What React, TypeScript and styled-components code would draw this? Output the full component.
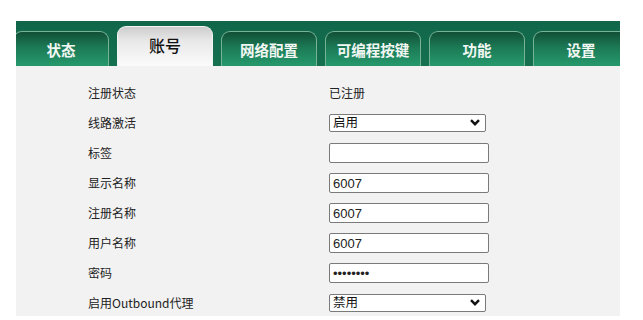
import React from "react";
import styled, { createGlobalStyle, css } from "styled-components";

const GlobalStyle = createGlobalStyle`
  html, body {
    margin: 0;
    padding: 0;
    background: #ffffff;
  }
  body {
    font-family: "Noto Sans CJK SC", "Liberation Sans", sans-serif;
  }
`;

const Page = styled.div`
  width: 643px;
  height: 320px;
  overflow: hidden;
  padding: 21px 0 0 16px;
  box-sizing: border-box;
`;

const Frame = styled.div`
  width: 604px;
`;

const TabBar = styled.div`
  height: 45px;
  background: linear-gradient(#11664a, #157150);
  display: flex;
  align-items: flex-end;
  gap: 8px;
  overflow: hidden;
`;

const Tab = styled.div<{ active?: boolean; first?: boolean }>`
  flex: 0 0 96px;
  box-sizing: border-box;
  border-radius: 9px 9px 0 0;
  display: flex;
  align-items: center;
  justify-content: center;
  font-weight: 700;
  ${({ first }) =>
    first &&
    css`
      margin-left: -3px;
    `}
  ${({ active }) =>
    active
      ? css`
          height: 40px;
          background: linear-gradient(#cdcdcd 0%, #e8e8e8 35%, #fbfbfb 100%);
          border: 1px solid #f4f4f4;
          border-bottom: none;
          color: #111;
          font-size: 16px;
          font-weight: 500;
          padding-bottom: 4px;
        `
      : css`
          height: 35px;
          background: linear-gradient(#114f37 0%, #1c7a55 45%, #26996d 100%);
          border: 1px solid #76b397;
          border-bottom: none;
          color: #f2f7f4;
          font-size: 14.5px;
        `}
`;

const Panel = styled.div`
  background: #f2f2f2;
  padding: 12px 0 0 72px;
  height: 250px;
  box-sizing: border-box;
`;

const Row = styled.div`
  height: 30px;
  display: grid;
  grid-template-columns: 241px 1fr;
  align-items: center;
  font-size: 12px;
  color: #222;
`;

const Label = styled.div`
  line-height: 14px;
`;

const Value = styled.div`
  line-height: 14px;
`;

const TextInput = styled.input`
  width: 160px;
  height: 20px;
  box-sizing: border-box;
  border: 1px solid #7a7a7a;
  border-radius: 2px;
  background: #fff;
  padding: 0 3px;
  font-family: "Liberation Sans", "Noto Sans CJK SC", sans-serif;
  font-size: 13px;
  color: #222;
  outline: none;
  display: block;
`;

const SelectWrap = styled.div`
  position: relative;
  width: 157px;
  height: 18px;
`;

const Select = styled.select`
  appearance: none;
  width: 100%;
  height: 100%;
  box-sizing: border-box;
  border: 1px solid #7a7a7a;
  border-radius: 2px;
  background: #fff;
  padding: 0 0 2px 3px;
  font-family: "Noto Sans CJK SC", sans-serif;
  font-size: 12.5px;
  line-height: 14px;
  color: #111;
  outline: none;
  display: block;
`;

const Chevron = styled.svg`
  position: absolute;
  right: 6px;
  top: 5px;
  pointer-events: none;
`;

const Dropdown = ({ value }: { value: string }) => (
  <SelectWrap>
    <Select defaultValue={value}>
      <option>{value}</option>
    </Select>
    <Chevron width="10" height="7" viewBox="0 0 10 7">
      <path d="M1 1.2 L5 5.2 L9 1.2" fill="none" stroke="#111" strokeWidth="2.4" />
    </Chevron>
  </SelectWrap>
);

const tabs = ["状态", "账号", "网络配置", "可编程按键", "功能", "设置"];

const App = () => {
  return (
    <Page>
      <GlobalStyle />
      <Frame>
        <TabBar>
          {tabs.map((t, i) => (
            <Tab key={t} active={t === "账号"} first={i === 0}>
              {t}
            </Tab>
          ))}
        </TabBar>
        <Panel>
          <Row>
            <Label>注册状态</Label>
            <Value>已注册</Value>
          </Row>
          <Row>
            <Label>线路激活</Label>
            <Dropdown value="启用" />
          </Row>
          <Row>
            <Label>标签</Label>
            <TextInput defaultValue="" />
          </Row>
          <Row>
            <Label>显示名称</Label>
            <TextInput defaultValue="6007" />
          </Row>
          <Row>
            <Label>注册名称</Label>
            <TextInput defaultValue="6007" />
          </Row>
          <Row>
            <Label>用户名称</Label>
            <TextInput defaultValue="6007" />
          </Row>
          <Row>
            <Label>密码</Label>
            <TextInput type="password" defaultValue="12345678" />
          </Row>
          <Row>
            <Label>启用Outbound代理</Label>
            <Dropdown value="禁用" />
          </Row>
        </Panel>
      </Frame>
    </Page>
  );
};

export default App;
